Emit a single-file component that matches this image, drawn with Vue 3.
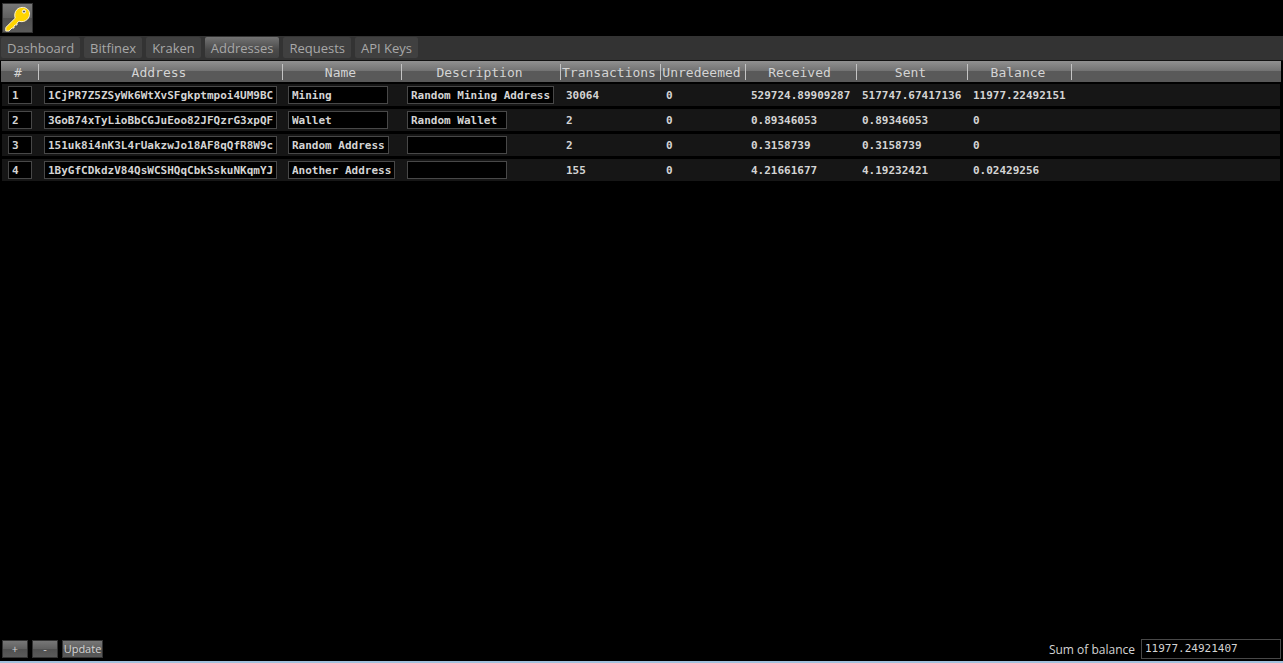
<script setup>
import { computed, ref } from "vue";

const tabs = ["Dashboard", "Bitfinex", "Kraken", "Addresses", "Requests", "API Keys"];
const activeTab = ref("Addresses");

const columns = [
  { key: "id", label: "#" },
  { key: "address", label: "Address" },
  { key: "name", label: "Name" },
  { key: "description", label: "Description" },
  { key: "transactions", label: "Transactions" },
  { key: "unredeemed", label: "Unredeemed" },
  { key: "received", label: "Received" },
  { key: "sent", label: "Sent" },
  { key: "balance", label: "Balance" },
];
const editable = ["id", "address", "name", "description"];

const rows = ref([
  {
    id: "1",
    address: "1CjPR7Z5ZSyWk6WtXvSFgkptmpoi4UM9BC",
    name: "Mining",
    description: "Random Mining Address",
    transactions: "30064",
    unredeemed: "0",
    received: "529724.89909287",
    sent: "517747.67417136",
    balance: "11977.22492151",
  },
  {
    id: "2",
    address: "3GoB74xTyLioBbCGJuEoo82JFQzrG3xpQF",
    name: "Wallet",
    description: "Random Wallet",
    transactions: "2",
    unredeemed: "0",
    received: "0.89346053",
    sent: "0.89346053",
    balance: "0",
  },
  {
    id: "3",
    address: "151uk8i4nK3L4rUakzwJo18AF8qQfR8W9c",
    name: "Random Address",
    description: "",
    transactions: "2",
    unredeemed: "0",
    received: "0.3158739",
    sent: "0.3158739",
    balance: "0",
  },
  {
    id: "4",
    address: "1ByGfCDkdzV84QsWCSHQqCbkSskuNKqmYJ",
    name: "Another Address",
    description: "",
    transactions: "155",
    unredeemed: "0",
    received: "4.21661677",
    sent: "4.19232421",
    balance: "0.02429256",
  },
]);

const sum = computed(() =>
  rows.value.reduce((total, row) => total + Number(row.balance), 0).toFixed(8),
);

function addRow() {
  const row = Object.fromEntries(columns.map((column) => [column.key, "0"]));
  rows.value.push({
    ...row,
    id: String(rows.value.length + 1),
    address: "",
    name: "",
    description: "",
  });
}

function removeRow() {
  rows.value.pop();
}
</script>

<template>
  <div class="window">
    <header class="toolbar">
      <button type="button" class="key-button" aria-label="Keys">
        <svg viewBox="0 0 29 28" aria-hidden="true">
          <path
            class="key-shape"
            d="M14 5.500C16.500 3 21.500 2.500 24.500 5.200S27 12.500 24.500 15.200C22 17.700 18.500 18.200 16 17.200L14 19V21H12L11 22V24H9L6 27H2.800V23.500L12.200 14.200C11.200 11.200 11.800 7.800 14 5.500Z"
          />
          <circle class="key-hole" cx="21" cy="7.500" r="1.600" />
        </svg>
      </button>
    </header>

    <nav class="tabs" role="tablist">
      <button
        v-for="tab in tabs"
        :key="tab"
        type="button"
        role="tab"
        class="tab"
        :class="{ active: tab === activeTab }"
        :aria-selected="tab === activeTab"
        @click="activeTab = tab"
      >
        {{ tab }}
      </button>
    </nav>

    <main class="content">
      <table class="grid">
        <colgroup>
          <col v-for="column in columns" :key="column.key" :class="`col-${column.key}`" />
          <col />
        </colgroup>
        <thead>
          <tr>
            <th v-for="column in columns" :key="column.key" scope="col">{{ column.label }}</th>
            <td></td>
          </tr>
        </thead>
        <tbody>
          <tr v-for="row in rows" :key="row.id">
            <td v-for="column in columns" :key="column.key">
              <input
                v-if="editable.includes(column.key)"
                v-model="row[column.key]"
                type="text"
                class="field"
                :class="{ short: column.key === 'id' }"
                :style="{ width: `${row[column.key].length}ch` }"
                :aria-label="`${column.label} ${row.id}`"
              />
              <span v-else class="value">{{ row[column.key] }}</span>
            </td>
            <td></td>
          </tr>
        </tbody>
      </table>
    </main>

    <footer class="footer">
      <button type="button" class="action" @click="addRow">+</button>
      <button type="button" class="action" @click="removeRow">-</button>
      <button type="button" class="action update">Update</button>
      <label class="sum-label" for="sum">Sum of balance</label>
      <input id="sum" class="sum" type="text" readonly :value="sum" />
    </footer>
  </div>
</template>

<style>
body {
  background: #000;
}
</style>

<style scoped>
.window {
  display: flex;
  flex-direction: column;
  box-sizing: border-box;
  min-height: 100vh;
  border-bottom: 2px solid #a3c2de;
  background: #000;
  color: #d4d4d4;
  font-family: "Open Sans", "Noto Sans", sans-serif;
  font-size: 13px;
}

button,
input {
  margin: 0;
  color: inherit;
  font: inherit;
}

.toolbar {
  display: flex;
  padding: 3px 2px;
}

.key-button {
  width: 31px;
  height: 30px;
  padding: 0;
  border: 1px solid #333;
  background: linear-gradient(#777 0%, #606060 50%, #505050 50%, #5a5a5a 100%);
}

.key-button svg {
  display: block;
  width: 29px;
  height: 28px;
}

.key-shape {
  fill: #ffd500;
  stroke: #fff4d0;
  stroke-width: 1;
  stroke-linejoin: round;
}

.key-hole {
  fill: #5d5d5d;
  stroke: #fff;
  stroke-width: 1;
}

.tabs {
  display: flex;
  gap: 4px;
  padding: 1px 1px 2px;
  border-bottom: 1px solid #111;
  background: #333;
}

.tab {
  height: 21px;
  padding: 2px 6px 0;
  border: 0;
  border-radius: 2px;
  background: #404040;
  color: #a8a8a8;
  line-height: 19px;
}

.tab.active {
  background: linear-gradient(#737373, #4a4a4a 60%, #424242);
}

.content {
  flex: 1;
  padding: 0 2px 0 1px;
}

.grid {
  width: 100%;
  border-spacing: 0;
  table-layout: fixed;
  font-family: "DejaVu Sans Mono", "Liberation Mono", monospace;
  font-size: 11px;
  font-weight: 700;
}

.col-id {
  width: 38px;
}

.col-address {
  width: 244px;
}

.col-name {
  width: 119px;
}

.col-description {
  width: 159px;
}

.col-transactions {
  width: 100px;
}

.col-unredeemed {
  width: 85px;
}

.col-received,
.col-sent {
  width: 111px;
}

.col-balance {
  width: 104px;
}

thead tr {
  height: 23px;
  background: linear-gradient(#909090 0, #727272 10px, #595959 10px, #595959 100%);
}

thead th,
thead td {
  padding: 0;
  border-bottom: 2px solid #000;
}

/* column separators */
thead th {
  padding: 2px 4px 0 0;
  background: linear-gradient(#c4c4c4, #c4c4c4) no-repeat right 3px / 1px 16px;
  font-size: 13px;
  font-weight: 400;
  line-height: 19px;
  white-space: nowrap;
}

tbody tr {
  height: 25px;
  background: #161616;
}

tbody td {
  padding: 0 0 0 5px;
  border-bottom: 3px solid #000;
  white-space: nowrap;
}

tbody td:first-child {
  padding-left: 6px;
  border-left: 1px solid #000;
}

tbody td:last-child {
  border-right: 1px solid #000;
}

.value {
  display: block;
  padding-top: 2px;
  line-height: 20px;
}

.field {
  display: block;
  height: 14px;
  min-width: 92px;
  padding: 2px 3px 0;
  border: 1px solid #484848;
  background: #000;
  line-height: 14px;
}

.field.short {
  min-width: 16px;
}

.footer {
  display: flex;
  align-items: center;
  gap: 4px;
  padding: 0 2px 2px;
}

.action {
  width: 26px;
  height: 18px;
  padding: 0;
  border: 1px solid #333;
  background: linear-gradient(#777 0%, #606060 50%, #505050 50%, #5a5a5a 100%);
  font-size: 11px;
  line-height: 16px;
}

.action.update {
  width: 41px;
}

.sum-label {
  margin-left: auto;
  font-size: 12px;
}

.sum {
  box-sizing: border-box;
  width: 140px;
  height: 20px;
  margin-left: 2px;
  padding: 0 3px 2px;
  border: 1px solid #484848;
  background: #000;
  font-family: "DejaVu Sans Mono", "Liberation Mono", monospace;
  font-size: 11px;
}
</style>
